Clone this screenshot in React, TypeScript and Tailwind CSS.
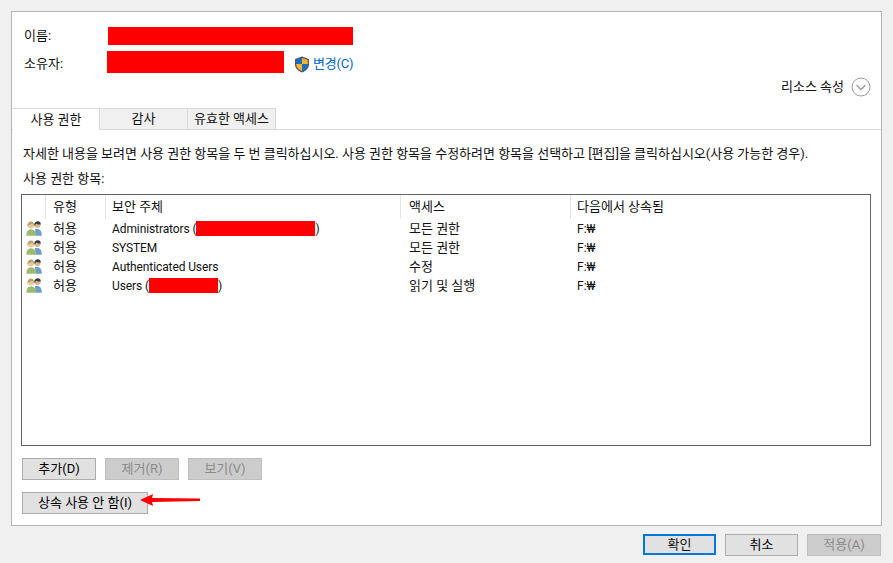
import { ReactNode } from "react";

const latin = { fontFamily: 'Roboto, "Noto Sans", sans-serif' };

const rows = [
  { principal: "Administrators (", redact: "w-[119px]", access: "모든 권한" },
  { principal: "SYSTEM", access: "모든 권한" },
  { principal: "Authenticated Users", access: "수정" },
  { principal: "Users (", redact: "w-[69px]", access: "읽기 및 실행" },
];

function Shield() {
  return (
    <svg width="16" height="17" viewBox="0 0 16 17">
      <path d="M8 .5 L15 3 V8.5 C15 12.5 11.5 15.3 8 16.5 C4.5 15.3 1 12.5 1 8.5 V3 Z" fill="#4d5a66" />
      <path d="M8 2 L13.8 4 V8 H8 Z" fill="#f5b52e" />
      <path d="M8 2 L2.2 4 V8 H8 Z" fill="#1a6fc4" />
      <path d="M2.2 8 H8 V15 C5 14 2.2 11.5 2.2 8 Z" fill="#f5b52e" />
      <path d="M13.8 8 H8 V15 C11 14 13.8 11.5 13.8 8 Z" fill="#1a6fc4" />
    </svg>
  );
}

function Users() {
  return (
    <svg width="16" height="15" viewBox="0 0 16 15">
      <path d="M9 8 C9 12 10 14.8 10 14.8 H15.8 C15.8 10.5 14.5 8.5 12 8 Z" fill="#6f9fc9" />
      <circle cx="11.5" cy="4" r="3" fill="#d8b48c" />
      <path d="M8.3 4 C8.3 1.5 10 .3 11.8 .3 C13.6 .3 14.8 1.5 14.8 3.5 C13 3.8 11 3 10 2.8 C9.5 3.5 9.3 4.5 9 5 Z" fill="#343a40" />
      <path d="M0.4 14.8 C0.4 10.5 2 8.5 5 8.3 C8 8.5 10 10.5 10 14.8 Z" fill="#9dbb6e" />
      <circle cx="5" cy="4.4" r="3" fill="#e6c9a0" />
      <path d="M1.5 6 C1 2.5 2.8 .5 5 .5 C7.4 .5 8.6 2.5 8.2 6 C7.6 4.5 7 3.3 6 2.8 C5 3.6 3.6 4 2.6 4 C2.3 4.6 2 5.4 1.5 6 Z" fill="#b9a468" />
    </svg>
  );
}

function Btn({
  children,
  className,
  disabled,
}: {
  children: ReactNode;
  className: string;
  disabled?: boolean;
}) {
  return (
    <div
      className={`flex items-center justify-center h-[22px] border ${
        disabled
          ? "bg-[#cccccc] border-[#bfbfbf] text-[#8a8a8a]"
          : "bg-[#e1e1e1] border-[#adadad] text-black"
      } ${className}`}
    >
      {children}
    </div>
  );
}

export default function App() {
  return (
    <div
      className="w-[893px] h-[563px] overflow-hidden bg-[#f0f0f0] pt-[11px] pl-[11px] text-[13px] leading-[16px] text-[#111]"
      style={{ fontFamily: 'Roboto, "Noto Sans CJK KR", sans-serif' }}
    >
      {/* Main panel */}
      <div className="relative w-[871px] h-[515px] bg-white border border-[#b4b4b4]">
        {/* Name / owner */}
        <div className="flex items-center h-[18px] mt-[15px] ml-[12px]">
          <span className="w-[84px]">이름:</span>
          <div className="w-[245px] h-[18px] bg-[#ff0000]" />
        </div>
        <div className="flex items-center h-[22px] mt-[6px] ml-[12px]">
          <span className="w-[83px] pt-[4px]">소유자:</span>
          <div className="w-[177px] h-[22px] bg-[#ff0000]" />
          <div className="ml-[10px] mr-[3px] pt-[4px] flex items-center"><Shield /></div>
          <span className="pt-[4px] text-[#0066cc] tracking-[-0.2px]">변경(C)</span>
        </div>

        {/* Resource properties */}
        <div className="flex items-center justify-end h-[20px] mt-[4px] pr-[10px]">
          <span className="mr-[7px]">리소스 속성</span>
          <svg width="20" height="20" viewBox="0 0 20 20" fill="none" stroke="#9a9a9a">
            <circle cx="10" cy="10" r="9" />
            <path d="M5.5 8 L10 12.5 L14.5 8" strokeWidth="1.3" />
          </svg>
        </div>

        {/* Tabs */}
        <div className="flex items-start h-[22px] mt-[11px] border-b border-[#d9d9d9] pl-[1px]">
          <div className="relative flex items-center justify-center w-[87px] h-[22px] bg-white border-t border-r border-[#d9d9d9]">
            사용 권한
          </div>
          <div className="flex items-center justify-center w-[88px] h-[21px] bg-[#f0f0f0] border-t border-r border-[#d9d9d9]">
            감사
          </div>
          <div className="flex items-center justify-center w-[88px] h-[21px] bg-[#f0f0f0] border-t border-r border-[#d9d9d9]">
            유효한 액세스
          </div>
        </div>

        <p className="ml-[11px] mt-[16px] whitespace-nowrap tracking-[-0.015px]">
          자세한 내용을 보려면 사용 권한 항목을 두 번 클릭하십시오. 사용 권한 항목을 수정하려면 항목을 선택하고 [편집]을 클릭하십시오(사용 가능한 경우).
        </p>
        <p className="ml-[11px] mt-[9px]">사용 권한 항목:</p>

        {/* Permissions table */}
        <div className="ml-[9px] mt-[7px] w-[850px] h-[252px] border border-[#646464]">
          <div className="flex h-[24px] items-center">
            <div className="w-[24px] h-full border-r border-[#e5e5e5]" />
            <div className="w-[60px] h-full pl-[7px] flex items-center border-r border-[#e5e5e5]">유형</div>
            <div className="w-[295px] h-full pl-[6px] flex items-center border-r border-[#e5e5e5]">보안 주체</div>
            <div className="w-[170px] h-full pl-[8px] flex items-center border-r border-[#e5e5e5]">액세스</div>
            <div className="flex-1 h-full pl-[6px] flex items-center">다음에서 상속됨</div>
          </div>
          {rows.map((row, i) => (
            <div key={i} className="flex h-[19px] items-center">
              <div className="w-[24px] pl-[4px] flex items-center"><Users /></div>
              <div className="w-[60px] pl-[7px]">허용</div>
              <div className="w-[295px] pl-[6px] flex items-center whitespace-nowrap text-[12px] tracking-[-0.1px]" style={latin}>
                {row.principal}
                {row.redact && (
                  <>
                    <span className={`h-[15px] bg-[#ff0000] ${row.redact}`} />
                    )
                  </>
                )}
              </div>
              <div className="w-[170px] pl-[8px]">{row.access}</div>
              <div className="flex-1 pl-[6px] text-[12px]">F:₩</div>
            </div>
          ))}
        </div>

        {/* Table actions */}
        <div className="flex ml-[10px] mt-[12px] gap-[9px]">
          <Btn className="w-[74px]">추가(D)</Btn>
          <Btn className="w-[74px]" disabled>제거(R)</Btn>
          <Btn className="w-[74px]" disabled>보기(V)</Btn>
        </div>
        <Btn className="ml-[10px] mt-[12px] w-[126px]">상속 사용 안 함(I)</Btn>

        {/* Annotation arrow */}
        <svg className="absolute left-[128px] top-[481px]" width="62" height="14" viewBox="0 0 62 14">
          <path d="M0 7 L13 1 L12 5 L60 5.5 L60 8 L12 9 L13 13 Z" fill="#ff0000" />
        </svg>
      </div>

      {/* Dialog buttons */}
      <div className="flex w-[871px] mt-[8px] pl-[632px]">
        <div className="flex items-center justify-center w-[73px] h-[21px] bg-[#e1e1e1] border-2 border-[#0078d7]">확인</div>
        <Btn className="w-[73px] h-[21px] ml-[9px]">취소</Btn>
        <Btn className="w-[74px] h-[21px] ml-[9px]" disabled>적용(A)</Btn>
      </div>
    </div>
  );
}
